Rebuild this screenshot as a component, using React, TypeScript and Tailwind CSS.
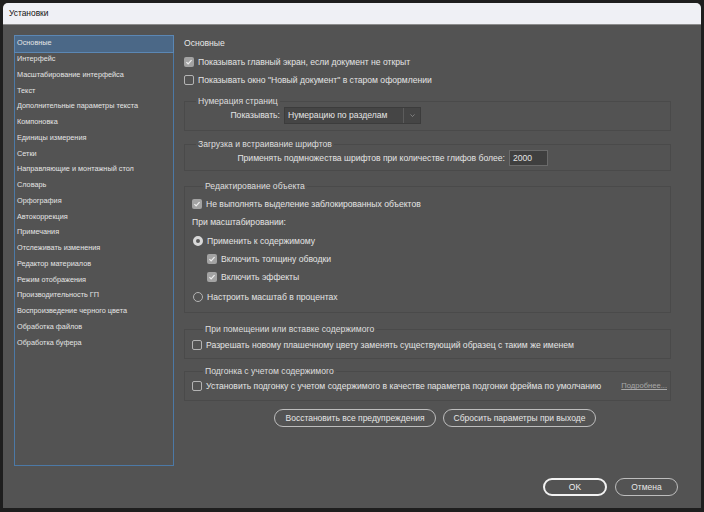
import React from "react";

const sections = [
  "Основные",
  "Интерфейс",
  "Масштабирование интерфейса",
  "Текст",
  "Дополнительные параметры текста",
  "Компоновка",
  "Единицы измерения",
  "Сетки",
  "Направляющие и монтажный стол",
  "Словарь",
  "Орфография",
  "Автокоррекция",
  "Примечания",
  "Отслеживать изменения",
  "Редактор материалов",
  "Режим отображения",
  "Производительность ГП",
  "Воспроизведение черного цвета",
  "Обработка файлов",
  "Обработка буфера",
];

const Check = ({ checked }: { checked?: boolean }) =>
  checked ? (
    <span className="w-[10px] h-[10px] rounded-[2px] bg-[#a3a3a3] flex items-center justify-center shrink-0">
      <svg viewBox="0 0 10 10" className="w-[8px] h-[8px]" fill="none" stroke="#ededed" strokeWidth={1.6}>
        <path d="M1.8 5.2l2.1 2.1 4.3-4.6" />
      </svg>
    </span>
  ) : (
    <span className="w-[10px] h-[10px] rounded-[2px] border border-[#b4b4b4] shrink-0" />
  );

const Radio = ({ checked }: { checked?: boolean }) =>
  checked ? (
    <span className="w-[10px] h-[10px] rounded-full border-[3px] border-[#d8d8d8] bg-[#5a5a5a] shrink-0" />
  ) : (
    <span className="w-[10px] h-[10px] rounded-full border border-[#b4b4b4] shrink-0" />
  );

const Group = ({ title, children, className = "" }: { title: string; children: React.ReactNode; className?: string }) => (
  <fieldset className={`border border-[#4a4a4a] ${className}`}>
    <legend className="ml-[11px] px-[2px] h-[12px] leading-[12px] text-[8.6px] text-[#dedede]">{title}</legend>
    {children}
  </fieldset>
);

export default function App() {
  return (
    <div
      className="w-[704px] h-[512px] bg-[#1e1e1e] pt-[3px] pl-[3px] pr-[3px] pb-[4px] text-[#e4e4e4]"
      style={{ fontFamily: '"Liberation Sans", Arial, sans-serif' }}
    >
      <div className="w-full h-full rounded-t-[5px] overflow-hidden flex flex-col bg-[#535353]">
        {/* Title bar */}
        <div className="h-[22px] bg-[#eff0f5] border-b border-[#8c8c8c] flex items-center pl-[6px] text-[8.4px] text-[#111]">
          Установки
        </div>

        <div className="flex-1 flex flex-col pt-[10px] pl-[11px] pr-[23px]">
          <div className="flex">
            {/* Sidebar */}
            <div className="w-[160px] h-[431px] border border-[#4c79a6] flex flex-col">
              {sections.map((s, i) => (
                <div
                  key={s}
                  className={`h-[15.75px] flex items-center pl-[2px] text-[7.3px] whitespace-nowrap ${
                    i === 0 ? "bg-[#4b6887] outline outline-1 outline-[#5b87b4]" : ""
                  }`}
                >
                  {s}
                </div>
              ))}
            </div>

            {/* Main */}
            <div className="ml-[10px] w-[487px] flex flex-col text-[8.6px] whitespace-nowrap">
              <div className="h-[16px] flex items-center text-[8.6px] text-[#e8e8e8]">Основные</div>
              <div className="mt-[2px] h-[18px] flex items-center gap-[4px]">
                <Check checked />
                <span>Показывать главный экран, если документ не открыт</span>
              </div>
              <div className="h-[18px] flex items-center gap-[4px]">
                <Check />
                <span>Показывать окно "Новый документ" в старом оформлении</span>
              </div>

              <Group title="Нумерация страниц" className="mt-[6px] pb-[6px]">
                <div className="h-[17px] flex items-center">
                  <span className="w-[95px] text-right">Показывать:</span>
                  <div className="ml-[4px] w-[137px] h-[17px] bg-[#454545] border border-[#3c3c3c] flex items-center">
                    <span className="flex-1 pl-[3px]">Нумерацию по разделам</span>
                    <span className="w-[17px] h-full border-l border-[#5c5c5c] flex items-center justify-center">
                      <svg viewBox="0 0 10 10" className="w-[7px] h-[7px]" fill="none" stroke="#9a9a9a" strokeWidth={1}>
                        <path d="M2 3.5l3 3 3-3" />
                      </svg>
                    </span>
                  </div>
                </div>
              </Group>

              <Group title="Загрузка и встраивание шрифтов" className="mt-[7px] pb-[4px]">
                <div className="h-[16px] flex items-center">
                  <span className="w-[320px] text-right">
                    Применять подмножества шрифтов при количестве глифов более:
                  </span>
                  <div className="ml-[4px] w-[39px] h-[16px] bg-[#3f3f3f] border border-[#6a6a6a] flex items-center pl-[3px]">
                    2000
                  </div>
                </div>
              </Group>

              <Group title="Редактирование объекта" className="mt-[9px] pb-[6px] pl-[7px]">
                <div className="mt-[3px] h-[18px] flex items-center gap-[4px]">
                  <Check checked />
                  <span>Не выполнять выделение заблокированных объектов</span>
                </div>
                <div className="h-[18px] flex items-center">При масштабировании:</div>
                <div className="h-[18px] mt-[1px] flex items-center gap-[4px] pl-[1px]">
                  <Radio checked />
                  <span>Применить к содержимому</span>
                </div>
                <div className="h-[18px] flex items-center gap-[4px] pl-[15px]">
                  <Check checked />
                  <span>Включить толщину обводки</span>
                </div>
                <div className="h-[18px] flex items-center gap-[4px] pl-[15px]">
                  <Check checked />
                  <span>Включить эффекты</span>
                </div>
                <div className="h-[18px] mt-[2px] flex items-center gap-[4px] pl-[1px]">
                  <Radio />
                  <span>Настроить масштаб в процентах</span>
                </div>
              </Group>

              <Group title="При помещении или вставке содержимого" className="mt-[10px] pb-[4px] pl-[7px]">
                <div className="mt-[1px] h-[18px] flex items-center gap-[4px]">
                  <Check />
                  <span>Разрешать новому плашечному цвету заменять существующий образец с таким же именем</span>
                </div>
              </Group>

              <Group title="Подгонка с учетом содержимого" className="mt-[6px] pb-[5px] pl-[7px] pr-[3px]">
                <div className="h-[18px] flex items-center gap-[4px]">
                  <Check />
                  <span className="flex-1">
                    Установить подгонку с учетом содержимого в качестве параметра подгонки фрейма по умолчанию
                  </span>
                  <span className="text-[7.6px] text-[#a9a9a9] underline">Подробнее...</span>
                </div>
              </Group>

              <div className="mt-[8px] pl-[90px] flex gap-[7px]">
                <button className="w-[162px] h-[18px] rounded-full border border-[#bdbdbd] text-[8.5px] text-[#e6e6e6]">
                  Восстановить все предупреждения
                </button>
                <button className="w-[153px] h-[18px] rounded-full border border-[#bdbdbd] text-[8.5px] text-[#e6e6e6]">
                  Сбросить параметры при выходе
                </button>
              </div>
            </div>
          </div>

          <div className="mt-[12px] flex justify-end gap-[8px]">
            <button className="w-[64px] h-[18px] rounded-full border-2 border-[#f2f2f2] text-[8.5px] text-[#f0f0f0]">
              OK
            </button>
            <button className="w-[63px] h-[18px] rounded-full border border-[#bdbdbd] text-[8.5px] text-[#e6e6e6]">
              Отмена
            </button>
          </div>
        </div>
      </div>
    </div>
  );
}
